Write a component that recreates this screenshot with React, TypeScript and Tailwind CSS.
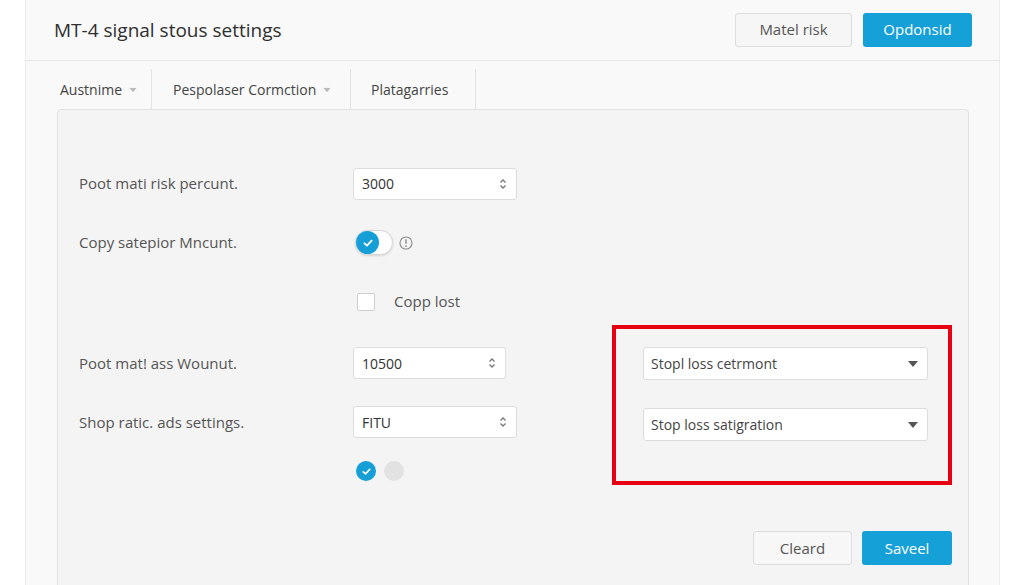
import React from "react";

const font = { fontFamily: '"Open Sans", "Liberation Sans", sans-serif' };

function Spinner() {
  return (
    <svg width="8" height="12" viewBox="0 0 8 12" className="text-[#777]">
      <path d="M1.5 4.5 4 2l2.5 2.5" fill="none" stroke="currentColor" strokeWidth="1.3" />
      <path d="M1.5 7.5 4 10l2.5-2.5" fill="none" stroke="currentColor" strokeWidth="1.3" />
    </svg>
  );
}

function Caret({ className = "" }: { className?: string }) {
  return (
    <svg width="10" height="6" viewBox="0 0 10 6" className={className}>
      <path d="M0 0h10L5 6z" fill="currentColor" />
    </svg>
  );
}

function Check({ size = 12 }: { size?: number }) {
  return (
    <svg width={size} height={size} viewBox="0 0 12 12">
      <path d="M2.5 6.3 5 8.6l4.6-5" fill="none" stroke="white" strokeWidth="1.8" strokeLinecap="round" strokeLinejoin="round" />
    </svg>
  );
}

function NumberInput({ value, width }: { value: string; width: string }) {
  return (
    <div
      className={`flex h-[32px] ${width} items-center justify-between rounded-[3px] border border-[#dcdcdc] bg-white pl-[8px] pr-[9px] text-[14px] text-[#333]`}
    >
      <span>{value}</span>
      <Spinner />
    </div>
  );
}

function Label({ children }: { children: React.ReactNode }) {
  return <span className="text-[15px] text-[#555]">{children}</span>;
}

function SelectBox({ children }: { children: React.ReactNode }) {
  return (
    <div className="flex h-[33px] w-[285px] items-center justify-between rounded-[3px] border border-[#dcdcdc] bg-white pl-[7px] pr-[9px] text-[14px] text-[#444]">
      <span>{children}</span>
      <Caret className="text-[#555]" />
    </div>
  );
}

export default function App() {
  return (
    <div className="h-[585px] w-[1024px] overflow-hidden bg-white" style={font}>
      <div className="ml-[25px] h-[600px] w-[975px] border-x border-[#ececec] bg-[#f9f9f9]">
        {/* header */}
        <div className="flex h-[61px] items-center justify-between border-b border-[#e6e6e6] pl-[28px] pr-[27px]">
          <h1 className="text-[19px] text-[#2f2f2f]">MT-4 signal stous settings</h1>
          <div className="flex gap-[11px] pb-[1px]">
            <button className="h-[34px] w-[117px] rounded-[3px] border border-[#dddddd] bg-[#f6f6f6] text-[15px] text-[#555]">
              Matel risk
            </button>
            <button className="h-[34px] w-[109px] rounded-[3px] bg-[#15a0d8] text-[15px] text-white">
              Opdonsid
            </button>
          </div>
        </div>

        {/* tabs */}
        <div className="flex h-[48px] items-end pl-[20px]">
          <div className="flex h-[40px]">
            <div className="flex w-[106px] items-center gap-[6px] border-r border-[#e3e3e3] pl-[14px] text-[14px] text-[#444]">
              Austnime <Caret className="mt-[1px] scale-75 text-[#bbb]" />
            </div>
            <div className="flex w-[199px] items-center gap-[6px] border-r border-[#e3e3e3] pl-[21px] text-[14px] text-[#444]">
              Pespolaser Cormction <Caret className="mt-[1px] scale-75 text-[#bbb]" />
            </div>
            <div className="flex w-[125px] items-center border-r border-[#e3e3e3] pl-[20px] text-[14px] text-[#444]">
              Platagarries
            </div>
          </div>
        </div>

        {/* panel */}
        <div className="ml-[31px] w-[912px] rounded-[4px] border border-[#e2e2e2] bg-[#f4f4f4] pb-[60px] pl-[21px] pr-[16px] pt-[44px]">
          <div className="grid grid-cols-[274px_259px_340px] grid-rows-[59px_59px_59px_64px_54px_44px]">
            <div className="flex items-center">
              <Label>Poot mati risk percunt.</Label>
            </div>
            <div className="col-span-2 flex items-center">
              <NumberInput value="3000" width="w-[164px]" />
            </div>

            <div className="flex items-center">
              <Label>Copy satepior Mncunt.</Label>
            </div>
            <div className="col-span-2 flex items-center gap-[6px] pl-[2px]">
              <div className="flex h-[25px] w-[38px] items-center rounded-full border border-[#d6d6d6] bg-white shadow-sm">
                <div className="flex h-[23px] w-[23px] items-center justify-center rounded-full bg-[#169fd6]">
                  <Check />
                </div>
              </div>
              <svg width="14" height="14" viewBox="0 0 13 13" className="text-[#888]">
                <circle cx="6.5" cy="6.5" r="5.6" fill="none" stroke="currentColor" strokeWidth="1" />
                <path d="M6.5 3v4.3" stroke="currentColor" strokeWidth="1.3" />
                <circle cx="6.5" cy="9.4" r="0.8" fill="currentColor" />
              </svg>
            </div>

            <div />
            <div className="col-span-2 flex items-center gap-[19px] pl-[4px]">
              <div className="h-[18px] w-[18px] rounded-[2px] border border-[#cfcfcf] bg-white" />
              <span className="text-[15px] text-[#555]">Copp lost</span>
            </div>

            <div className="flex items-center">
              <Label>Poot mat! ass Wounut.</Label>
            </div>
            <div className="flex items-center">
              <NumberInput value="10500" width="w-[153px]" />
            </div>
            <div className="row-span-3 -mt-[6px] h-[160px] border-[4px] border-[#e60012] pl-[27px] pt-[18px]">
              <div className="flex flex-col gap-[28px]">
                <SelectBox>Stopl loss cetrmont</SelectBox>
                <SelectBox>Stop loss satigration</SelectBox>
              </div>
            </div>

            <div className="flex items-center">
              <Label>Shop ratic. ads settings.</Label>
            </div>
            <div className="flex items-center">
              <NumberInput value="FITU" width="w-[164px]" />
            </div>

            <div />
            <div className="flex items-center gap-[8px] pl-[3px]">
              <div className="flex h-[20px] w-[20px] items-center justify-center rounded-full bg-[#169fd6]">
                <Check size={11} />
              </div>
              <div className="h-[20px] w-[20px] rounded-full bg-[#e2e2e2]" />
            </div>
          </div>

          <div className="mt-[38px] flex justify-end gap-[10px]">
            <button className="h-[34px] w-[99px] rounded-[3px] border border-[#dddddd] bg-[#f7f7f7] text-[15px] text-[#555]">
              Cleard
            </button>
            <button className="h-[34px] w-[90px] rounded-[3px] bg-[#15a0d8] text-[15px] text-white">
              Saveel
            </button>
          </div>
        </div>
      </div>
    </div>
  );
}
